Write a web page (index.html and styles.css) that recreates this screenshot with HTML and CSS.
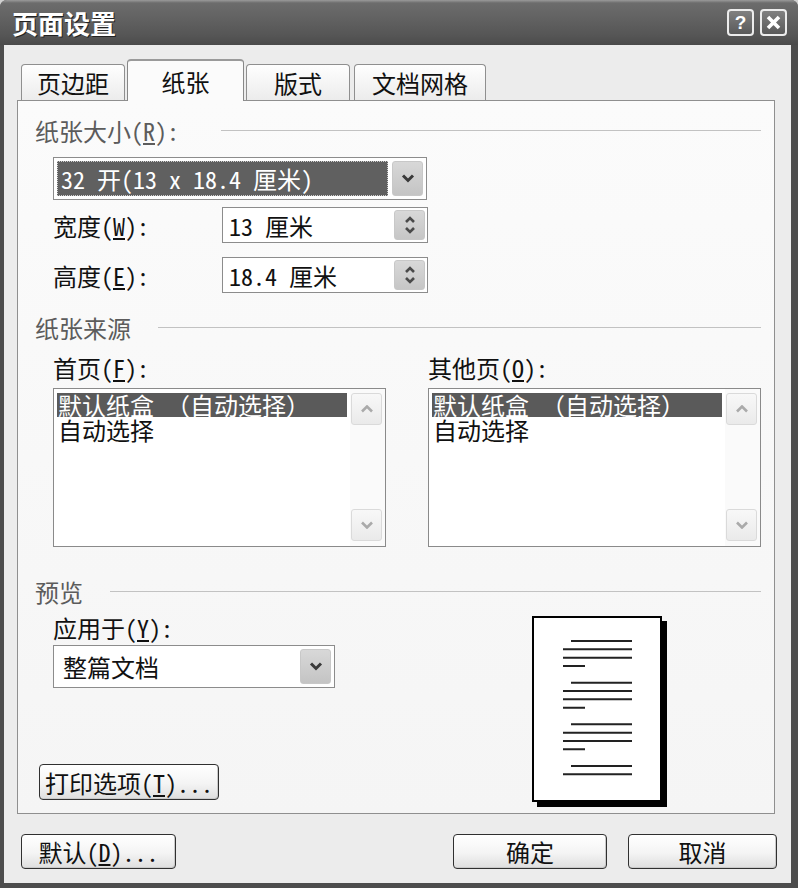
FILE: index.html
```html
<!DOCTYPE html>
<html lang="zh-CN">
<head>
    <meta charset="UTF-8">
    <title>页面设置</title>
    <link rel="stylesheet" href="styles.css">
</head>
<body>
<div class="window">
    <!-- 标题栏 -->
    <div class="title-bar">
        <div class="title">页面设置</div>
        <div class="caption-btns">
            <span class="caption-btn help">?</span>
            <span class="caption-btn close">
                <svg width="15" height="15" viewBox="0 0 15 15"><path d="M2 2 L13 13 M13 2 L2 13" stroke="#fff" stroke-width="3.6"/></svg>
            </span>
        </div>
    </div>

    <div class="client">
        <!-- 选项卡 -->
        <div class="tabs">
            <div class="tab tab-margins">页边距</div>
            <div class="tab tab-paper active">纸张</div>
            <div class="tab tab-layout">版式</div>
            <div class="tab tab-grid">文档网格</div>
        </div>

        <div class="panel">
            <div class="group-head size-head">
                <span>纸张大小(<u>R</u>):</span>
                <div class="rule"></div>
            </div>
            <div class="combo paper-size indent">
                <div class="combo-value selected">32 开(13 x 18.4 厘米)</div>
                <span class="drop-btn">
                    <svg width="14" height="9" viewBox="0 0 14 9"><path d="M2 1.5 L7 6.5 L12 1.5" fill="none" stroke="#3a3a3a" stroke-width="3"/></svg>
                </span>
            </div>
            <div class="field-row indent row-width">
                <label>宽度(<u>W</u>):</label>
                <div class="spin">
                    <span class="spin-value">13 厘米</span>
                    <span class="spin-btn">
                        <svg width="12" height="20" viewBox="0 0 12 20"><path d="M2 7 L6 3 L10 7 M2 13 L6 17 L10 13" fill="none" stroke="#4a4a4a" stroke-width="2.6"/></svg>
                    </span>
                </div>
            </div>
            <div class="field-row indent row-height">
                <label>高度(<u>E</u>):</label>
                <div class="spin">
                    <span class="spin-value">18.4 厘米</span>
                    <span class="spin-btn">
                        <svg width="12" height="20" viewBox="0 0 12 20"><path d="M2 7 L6 3 L10 7 M2 13 L6 17 L10 13" fill="none" stroke="#4a4a4a" stroke-width="2.6"/></svg>
                    </span>
                </div>
            </div>

            <div class="group-head source-head">
                <span>纸张来源</span>
                <div class="rule"></div>
            </div>
            <div class="source-row indent">
                <div class="source-col">
                    <div class="field-label">首页(<u>F</u>):</div>
                    <div class="listbox">
                        <div class="list-items">
                            <div class="list-item selected">默认纸盒 （自动选择）</div>
                            <div class="list-item">自动选择</div>
                        </div>
                        <div class="scrollbar">
                            <span class="scroll-btn"><svg width="14" height="8" viewBox="0 0 14 8"><path d="M2 6.5 L7 1.5 L12 6.5" fill="none" stroke="#aaa" stroke-width="2.6"/></svg></span>
                            <span class="scroll-btn"><svg width="14" height="8" viewBox="0 0 14 8"><path d="M2 1.5 L7 6.5 L12 1.5" fill="none" stroke="#aaa" stroke-width="2.6"/></svg></span>
                        </div>
                    </div>
                </div>
                <div class="source-col">
                    <div class="field-label">其他页(<u>O</u>):</div>
                    <div class="listbox">
                        <div class="list-items">
                            <div class="list-item selected">默认纸盒 （自动选择）</div>
                            <div class="list-item">自动选择</div>
                        </div>
                        <div class="scrollbar">
                            <span class="scroll-btn"><svg width="14" height="8" viewBox="0 0 14 8"><path d="M2 6.5 L7 1.5 L12 6.5" fill="none" stroke="#aaa" stroke-width="2.6"/></svg></span>
                            <span class="scroll-btn"><svg width="14" height="8" viewBox="0 0 14 8"><path d="M2 1.5 L7 6.5 L12 1.5" fill="none" stroke="#aaa" stroke-width="2.6"/></svg></span>
                        </div>
                    </div>
                </div>
            </div>

            <div class="group-head preview-head">
                <span>预览</span>
                <div class="rule"></div>
            </div>
            <div class="preview-row">
                <div class="apply-col">
                    <div class="field-label indent">应用于(<u>Y</u>):</div>
                    <div class="combo apply-to indent">
                        <div class="combo-value">整篇文档</div>
                        <span class="drop-btn">
                            <svg width="14" height="9" viewBox="0 0 14 9"><path d="M2 1.5 L7 6.5 L12 1.5" fill="none" stroke="#3a3a3a" stroke-width="3"/></svg>
                        </span>
                    </div>
                    <button class="btn btn-print">打印选项(<u>T</u>)...</button>
                </div>
                <svg class="page-preview" width="136" height="192" viewBox="0 0 136 192">
                    <rect x="5" y="5" width="130" height="186" fill="#000"/>
                    <rect x="1" y="1" width="128" height="184" fill="#fff" stroke="#000" stroke-width="2"/>
                    <g stroke="#222" stroke-width="2">
                        <path d="M39 25 H100 M31 33.3 H100 M31 41.7 H100 M31 50 H53"/>
                        <path d="M39 66.7 H100 M31 75 H100 M31 83.3 H100 M31 91.7 H53"/>
                        <path d="M39 108.3 H100 M31 116.7 H100 M31 125 H100 M31 133.3 H53"/>
                        <path d="M39 150 H100 M31 158.3 H100"/>
                    </g>
                </svg>
            </div>
        </div>

        <!-- 底部按钮 -->
        <div class="footer">
            <button class="btn btn-default">默认(<u>D</u>)...</button>
            <button class="btn btn-ok">确定</button>
            <button class="btn btn-cancel">取消</button>
        </div>
    </div>
</div>
</body>
</html>
```

FILE: styles.css
```css
* {
    margin: 0;
    padding: 0;
    box-sizing: border-box;
}

body {
    background: #d0d0d0;
    font-family: "Noto Sans Mono CJK SC", "Noto Sans CJK SC", sans-serif;
    font-size: 24px;
    color: #111;
}

u {
    text-decoration: underline;
    text-underline-offset: 2px;
}

.window {
    width: 798px;
    height: 888px;
    display: flex;
    flex-direction: column;
    border-radius: 7px 7px 0 0;
    overflow: hidden;
    background: #4d4d4d;
}

/* 标题栏 */
.title-bar {
    height: 45px;
    flex: none;
    display: flex;
    align-items: center;
    justify-content: space-between;
    padding: 0 11px 0 12px;
    background: linear-gradient(#9a9a9a 0, #6c6c6c 3px, #626262 40%, #555 80%, #4a4a4a 100%);
}

.title {
    color: #fff;
    font-family: "Noto Sans CJK SC", sans-serif;
    font-weight: bold;
    font-size: 26px;
    text-shadow: 1px 1px 0 #222;
}

.caption-btns {
    display: flex;
    gap: 6px;
}

.caption-btn {
    width: 27px;
    height: 27px;
    border: 2px solid #ececec;
    border-radius: 4px;
    background: linear-gradient(#808080, #5a5a5a);
    display: flex;
    align-items: center;
    justify-content: center;
    color: #fff;
}

.caption-btn.help {
    font-family: "Liberation Sans", sans-serif;
    font-weight: bold;
    font-size: 19px;
}

/* 主区域 */
.client {
    flex: 1;
    background: #ececec;
    border-left: 4px solid #4d4d4d;
    border-right: 7px solid #4d4d4d;
    border-bottom: 5px solid #4d4d4d;
    padding: 14px 16px 0 13px;
}

.tabs {
    display: flex;
    align-items: flex-end;
    gap: 2px;
    padding-left: 4px;
}

.tab {
    height: 36px;
    border: 1px solid #8f8f8f;
    border-bottom: none;
    border-radius: 4px 4px 0 0;
    background: linear-gradient(#fefefe, #ececec);
    display: flex;
    align-items: center;
    justify-content: center;
}

.tab.active {
    height: 42px;
    margin-bottom: -1px;
    background: #fbfbfb;
    border-color: #888;
    border-top: 2px solid #9a9a9a;
    position: relative;
    z-index: 1;
}

.tab-margins { width: 104px; }
.tab-paper { width: 117px; }
.tab-layout { width: 104px; }
.tab-grid { width: 132px; margin-left: 2px; }

.panel {
    border: 1px solid #8f8f8f;
    background: linear-gradient(#fbfbfb, #f5f5f5);
    padding: 14px 13px 5px 17px;
}

.group-head {
    height: 30px;
    display: flex;
    align-items: center;
    gap: 27px;
    color: #5c5c5c;
}

.group-head.size-head {
    gap: 42px;
}

.group-head .rule {
    flex: 1;
    height: 1px;
    background: #c2c2c2;
}

.indent {
    margin-left: 18px;
}

/* 下拉框 */
.combo {
    height: 43px;
    border: 1px solid #8c8c8c;
    background: #fff;
    display: flex;
    padding: 3px;
}

.paper-size {
    width: 374px;
    margin-top: 12px;
}

.combo-value {
    flex: 1;
    display: flex;
    align-items: center;
    padding-left: 4px;
    white-space: nowrap;
}

.combo-value.selected {
    background: #606060;
    color: #fff;
    outline: 1px dotted #d0d0d0;
    outline-offset: -1px;
}

.drop-btn {
    width: 31px;
    margin-left: 4px;
    border-radius: 3px;
    background: linear-gradient(#d8d8d8, #c4c4c4);
    border: 1px solid #c8c8c8;
    display: flex;
    align-items: center;
    justify-content: center;
}

/* 数值框 */
.field-row {
    display: flex;
    align-items: center;
}

.field-row label {
    width: 169px;
}

.row-width { margin-top: 7px; }
.row-height { margin-top: 14px; }

.spin {
    width: 206px;
    height: 36px;
    border: 1px solid #8c8c8c;
    background: #fff;
    display: flex;
    padding: 2px;
}

.spin-value {
    flex: 1;
    display: flex;
    align-items: center;
    padding-left: 4px;
}

.spin-btn {
    width: 31px;
    border-radius: 3px;
    background: linear-gradient(#d8d8d8, #c6c6c6);
    border: 1px solid #c8c8c8;
    display: flex;
    align-items: center;
    justify-content: center;
}

/* 纸张来源 */
.source-head { margin-top: 19px; }

.source-row {
    display: flex;
    gap: 42px;
}

.source-col {
    width: 333px;
}

.field-label {
    height: 30px;
    display: flex;
    align-items: center;
    margin-top: 10px;
}

.listbox {
    height: 159px;
    margin-top: 6px;
    border: 1px solid #8a8a8a;
    background: #fff;
    display: flex;
}

.list-items {
    flex: 1;
    padding: 4px 3px 0 3px;
}

.list-item {
    height: 24px;
    line-height: 24px;
    white-space: nowrap;
    padding-left: 1px;
}

.list-item + .list-item {
    margin-top: 1px;
}

.list-item.selected {
    background: #5a5a5a;
    color: #fff;
}

.scrollbar {
    width: 35px;
    background: #fafafa;
    display: flex;
    flex-direction: column;
    justify-content: space-between;
    padding: 4px 3px 5px 1px;
}

.scroll-btn {
    height: 32px;
    border: 1px solid #dadada;
    border-radius: 3px;
    background: linear-gradient(#f8f8f8, #eaeaea);
    display: flex;
    align-items: center;
    justify-content: center;
}

/* 预览 */
.preview-head { margin-top: 29px; }

.preview-row {
    display: flex;
    align-items: flex-start;
}

.apply-col {
    width: 300px;
    display: flex;
    flex-direction: column;
    align-items: flex-start;
}

.apply-col .field-label {
    margin-top: 6px;
}

.apply-to {
    width: 282px;
    margin-top: 3px;
}

.apply-to .combo-value {
    padding-left: 6px;
}

.page-preview {
    margin-left: 197px;
    margin-top: 10px;
}

/* 按钮 */
.btn {
    height: 35px;
    border: 1px solid #303030;
    border-radius: 4px;
    background: linear-gradient(#ffffff 0, #f4f4f4 55%, #dedede 100%);
    box-shadow: inset -1px -1px 0 #cacaca;
    font: inherit;
    color: #111;
    white-space: nowrap;
    padding: 0;
    display: flex;
    align-items: center;
    justify-content: center;
}

.btn-print {
    width: 180px;
    height: 36px;
    margin-top: 76px;
    margin-left: 4px;
    margin-bottom: 7px;
}

.footer {
    display: flex;
    margin-top: 20px;
    margin-right: -2px;
    padding-left: 4px;
}

.btn-default { width: 155px; }
.btn-ok { width: 154px; margin-left: auto; }
.btn-cancel { width: 149px; margin-left: 21px; }
```
